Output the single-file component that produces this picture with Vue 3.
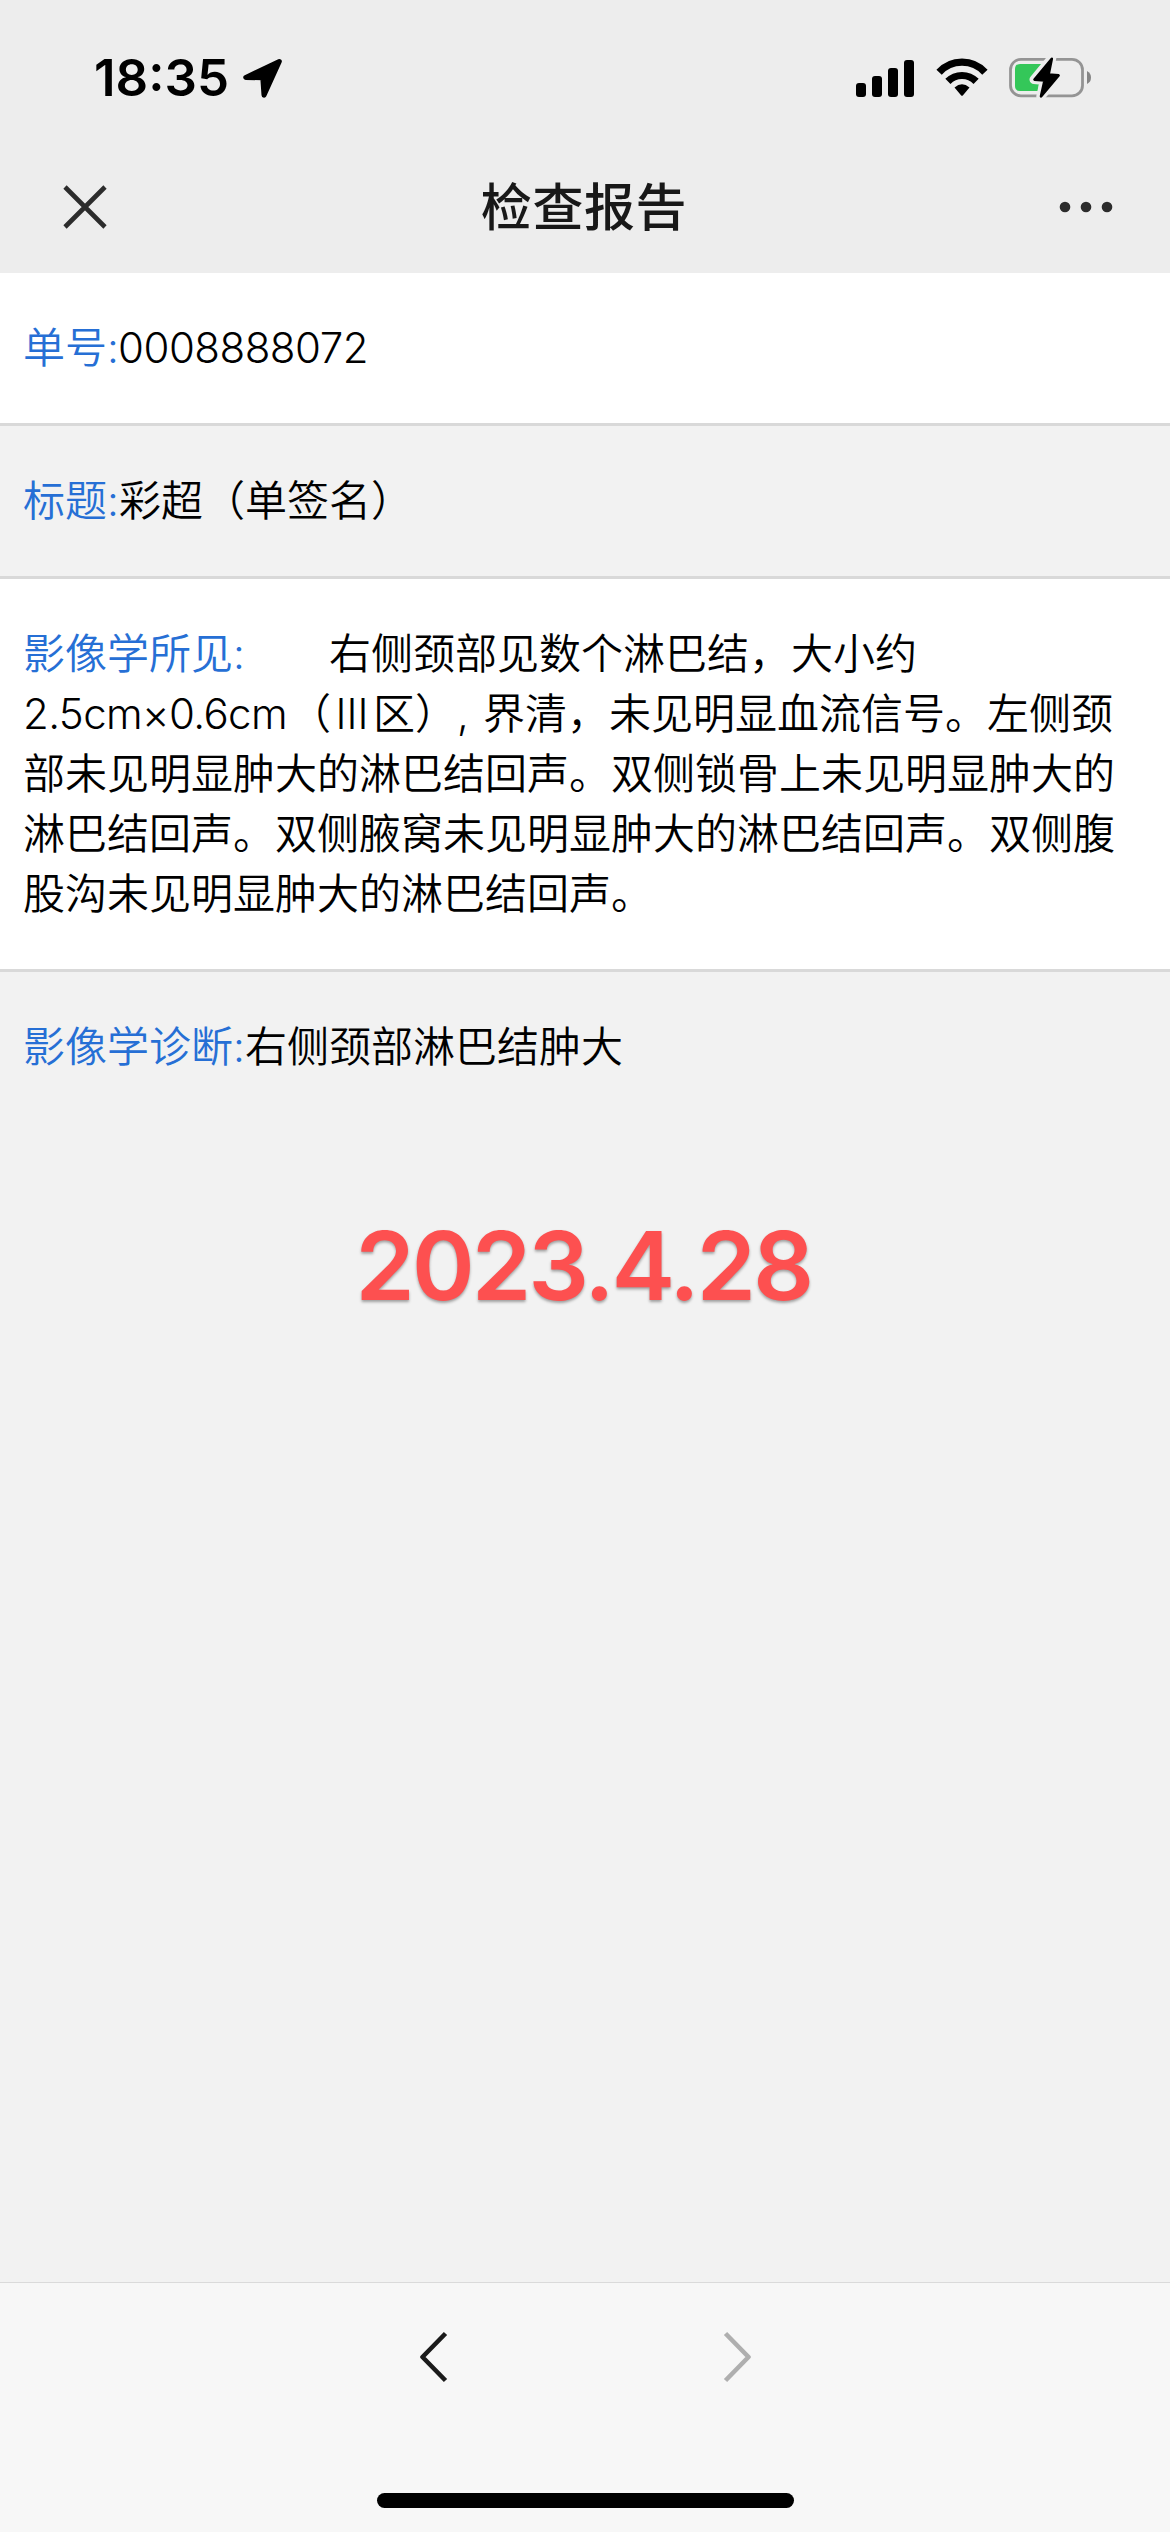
<script setup>
const bars = [14, 21, 29, 37]
</script>

<template>
  <div class="screen" lang="zh-CN">
    <header class="top">
      <div class="status">
        <span class="clock">18:35</span>
        <svg class="arrow" width="42" height="42" viewBox="241 57 42 42">
          <path d="M279.3 61.5 L245.8 77.4 L262.8 77.8 L264 95.2 Z" stroke="#000" stroke-width="5" stroke-linejoin="round" />
        </svg>
        <div class="signal">
          <i v-for="h in bars" :key="h" :style="{ height: h + 'px' }"></i>
        </div>
        <svg class="wifi" width="52" height="40" viewBox="935.5 58 52 40">
          <g fill="none" stroke="#000" stroke-width="7.2">
            <path d="M938.6 72.2 A31 31 0 0 1 984.4 72.2" />
            <path d="M947.4 81.4 A19.8 19.8 0 0 1 975.6 81.4" />
          </g>
          <path d="M954 87.6 Q961.5 80.8 969 87.6 L962.5 95.2 Q961.5 96.4 960.5 95.2 Z" />
        </svg>
        <svg class="battery" width="84" height="44" viewBox="1008 56 84 44">
          <rect x="1010.5" y="59.3" width="72" height="36.6" rx="10.5" fill="none" stroke="#949494" stroke-width="2.8" />
          <path d="M1087 71 Q1091 73 1091 77.5 Q1091 82 1087 84 Z" fill="#858585" />
          <path d="M1020 64 H1042 L1038 91 H1020 Q1015 91 1015 86 V69 Q1015 64 1020 64 Z" fill="#34c759" />
          <path d="M1051.8 58 L1034 79.6 L1044.3 80.4 L1040.8 96.4 L1059 75.6 L1048.6 74.6 Z" fill="#ededed" stroke="#ededed" stroke-width="9" stroke-linejoin="round" />
          <path d="M1051.8 58.8 L1034.5 79.6 L1044.6 80.4 L1041 96.4 L1058.6 75.4 L1048.6 74.6 Z" stroke="#000" stroke-width="2.6" stroke-linejoin="round" />
        </svg>
      </div>
      <nav class="nav">
        <svg width="44" height="44" viewBox="0 0 44 44"><path d="M2 2 L42 42 M42 2 L2 42" stroke="#2c2c2c" stroke-width="4.6" /></svg>
        <h1>检查报告</h1>
        <svg width="54" height="12" viewBox="0 0 54 12" fill="#2c2c2c"><circle cx="6" cy="6" r="5.3" /><circle cx="27" cy="6" r="5.3" /><circle cx="48" cy="6" r="5.3" /></svg>
      </nav>
    </header>

    <main class="report">
      <section class="row">
        <p><b>单号<span class="colon">:</span></b><span class="number">0008888072</span></p>
      </section>
      <section class="row alt">
        <p><b>标题<span class="colon">:</span></b>彩超（单签名）</p>
      </section>
      <section class="row">
        <p><b>影像学所见<span class="colon">:</span></b>&#12288;&#12288;右侧颈部见数个淋巴结，大小约</p>
        <p><span class="measure">2.5cm×0.6cm</span>（<span class="roman">III</span>区）<span class="comma">,</span>界清，未见明显血流信号。左侧颈</p>
        <p>部未见明显肿大的淋巴结回声。双侧锁骨上未见明显肿大的</p>
        <p>淋巴结回声。双侧腋窝未见明显肿大的淋巴结回声。双侧腹</p>
        <p>股沟未见明显肿大的淋巴结回声。</p>
      </section>
      <section class="row last">
        <p><b>影像学诊断<span class="colon">:</span></b>右侧颈部淋巴结肿大</p>
      </section>
      <div class="date">2023.4.28</div>
    </main>

    <footer class="toolbar">
      <div class="history">
        <svg width="28" height="52" viewBox="0 0 28 52" fill="none" stroke="#1b1b1b" stroke-width="4.6" stroke-linejoin="round"><path d="M25.5 2.5 L2.5 26 L25.5 49.5" /></svg>
        <svg width="28" height="52" viewBox="0 0 28 52" fill="none" stroke="#afafaf" stroke-width="4.6" stroke-linejoin="round"><path d="M2.5 2.5 L25.5 26 L2.5 49.5" /></svg>
      </div>
      <div class="home"></div>
    </footer>
  </div>
</template>

<style>
body { margin: 0; background: #f2f2f2; }
</style>

<style scoped>
.screen {
  width: 1170px;
  height: 2532px;
  display: flex;
  flex-direction: column;
  overflow: hidden;
  background: #f2f2f2;
  color: #000;
  font-family: Inter, "Noto Sans CJK SC", sans-serif;
}
svg { display: block; flex: none; }
.top { height: 273px; background: #ededed; flex: none; }
.status { height: 156px; display: flex; align-items: center; }
.clock {
  width: 147px;
  margin-left: 94px;
  font-size: 51px;
  line-height: 60px;
  font-weight: 600;
  white-space: nowrap;
}
.signal { display: flex; align-items: flex-end; gap: 6px; margin-left: 573px; height: 37px; }
.signal i { width: 10px; border-radius: 3px; background: #000; }
.wifi { margin-left: 21.5px; }
.battery { margin-left: 20.5px; }
.nav {
  height: 102px;
  padding: 0 57px 0 63px;
  display: flex;
  align-items: center;
  justify-content: space-between;
}
h1 {
  margin: 0;
  padding: 0 0 6px 2px;
  font: 500 51px/72px "Noto Sans CJK SC", sans-serif;
  letter-spacing: 0.6px;
  color: #181818;
}
.report { flex: 1; }
.row { padding: 42px 23px 48px; border-bottom: 3px solid #d9d9d9; background: #fff; }
.alt, .last { background: #f2f2f2; }
.last { border-bottom: 0; }
p {
  margin: 0;
  height: 60px;
  font: 350 42px/60px "Noto Sans CJK SC", sans-serif;
  white-space: nowrap;
  text-spacing-trim: space-all;
}
b { font-weight: inherit; color: #266fd5; }
.colon, .number, .measure, .roman, .comma { display: inline-block; font-family: Inter, sans-serif; font-weight: 350; }
.colon { width: 12px; }
.number { letter-spacing: -0.5px; margin-left: -1px; }
.measure { width: 266px; letter-spacing: -0.6px; }
.roman { width: 42px; text-align: center; }
.comma { width: 26px; }
.date {
  margin: 84px 3px 0 0;
  text-align: center;
  font-size: 95px;
  line-height: 120px;
  font-weight: 600;
  letter-spacing: -2.7px;
  color: #fd5050;
  text-shadow: 0 2px 3px rgba(0, 0, 0, 0.35);
}
.toolbar {
  height: 249px;
  flex: none;
  border-top: 1px solid #dadada;
  background: #f7f7f7;
  display: flex;
  flex-direction: column;
  align-items: center;
}
.history { height: 210px; display: flex; gap: 275px; padding-top: 48px; box-sizing: border-box; }
.home { width: 417px; height: 15px; border-radius: 7.5px; background: #000; }
</style>
